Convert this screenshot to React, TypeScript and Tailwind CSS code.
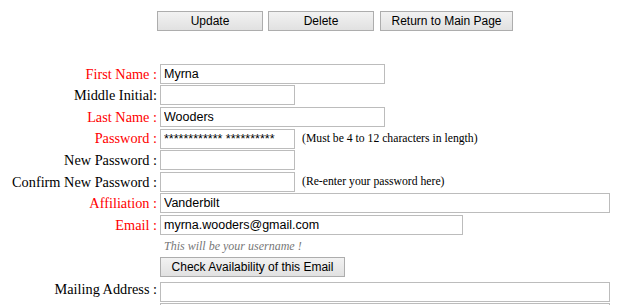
import React from "react";

type Row = {
  label: string;
  required?: boolean;
  value?: string;
  width: number;
  hint?: string;
};

const rows: Row[] = [
  { label: "First Name :", required: true, value: "Myrna", width: 225 },
  { label: "Middle Initial:", width: 135 },
  { label: "Last Name :", required: true, value: "Wooders", width: 225 },
  {
    label: "Password :",
    required: true,
    value: "************ **********",
    width: 135,
    hint: "(Must be 4 to 12 characters in length)",
  },
  { label: "New Password :", width: 135 },
  { label: "Confirm New Password :", width: 135, hint: "(Re-enter your password here)" },
  { label: "Affiliation :", required: true, value: "Vanderbilt", width: 450 },
  { label: "Email :", required: true, value: "myrna.wooders@gmail.com", width: 303 },
];

const serif = "font-['Liberation_Serif','Times_New_Roman',serif]";
const sans = "font-['Liberation_Sans',Arial,sans-serif]";

function Field({ value, width }: { value?: string; width: number }) {
  return (
    <input
      readOnly
      value={value ?? ""}
      style={{ width }}
      className={`h-[20px] border border-[#bcbcbc] bg-white px-[3px] text-[12.5px] text-black outline-none ${sans}`}
    />
  );
}

function Btn({ children, className = "" }: { children: React.ReactNode; className?: string }) {
  return (
    <button
      className={`h-[20px] border border-[#adadad] bg-gradient-to-b from-[#f2f2f2] to-[#e1e1e1] text-[12px] text-black ${sans} ${className}`}
    >
      {children}
    </button>
  );
}

export default function App() {
  return (
    <div className="h-[305px] w-[624px] overflow-hidden bg-white">
      <div className="flex gap-[5px] pl-[157px] pt-[11px]">
        <Btn className="w-[106px]">Update</Btn>
        <Btn className="w-[106px]">Delete</Btn>
        <Btn className="ml-[1px] w-[133px]">Return to Main Page</Btn>
      </div>

      <div className="mt-[32px]">
        {rows.map((r) => (
          <div key={r.label} className="flex h-[21.6px] items-center">
            <div
              className={`w-[157px] text-right text-[14.3px] leading-none ${serif} ${
                r.required ? "text-[#ff0000]" : "text-black"
              }`}
            >
              {r.label}
            </div>
            <div className="ml-[3px] flex items-center">
              <Field value={r.value} width={r.width} />
              {r.hint && (
                <span className={`ml-[7px] text-[11.7px] text-black ${serif}`}>{r.hint}</span>
              )}
            </div>
          </div>
        ))}

        <div className="flex h-[20px] items-center pl-[164px]">
          <span className={`text-[12px] italic text-[#777777] ${serif}`}>
            This will be your username !
          </span>
        </div>
        <div className="flex h-[23px] items-center pl-[160px]">
          <Btn className="w-[185px]">Check Availability of this Email</Btn>
        </div>
        <div className="flex h-[21.6px] items-center">
          <div className={`w-[157px] text-right text-[14.3px] leading-none text-black ${serif}`}>
            Mailing Address :
          </div>
          <div className="ml-[3px]">
            <Field width={450} />
          </div>
        </div>
        <div className="flex h-[21.6px] items-center">
          <div className="w-[157px]" />
          <div className="ml-[3px]">
            <Field width={450} />
          </div>
        </div>
      </div>
    </div>
  );
}
